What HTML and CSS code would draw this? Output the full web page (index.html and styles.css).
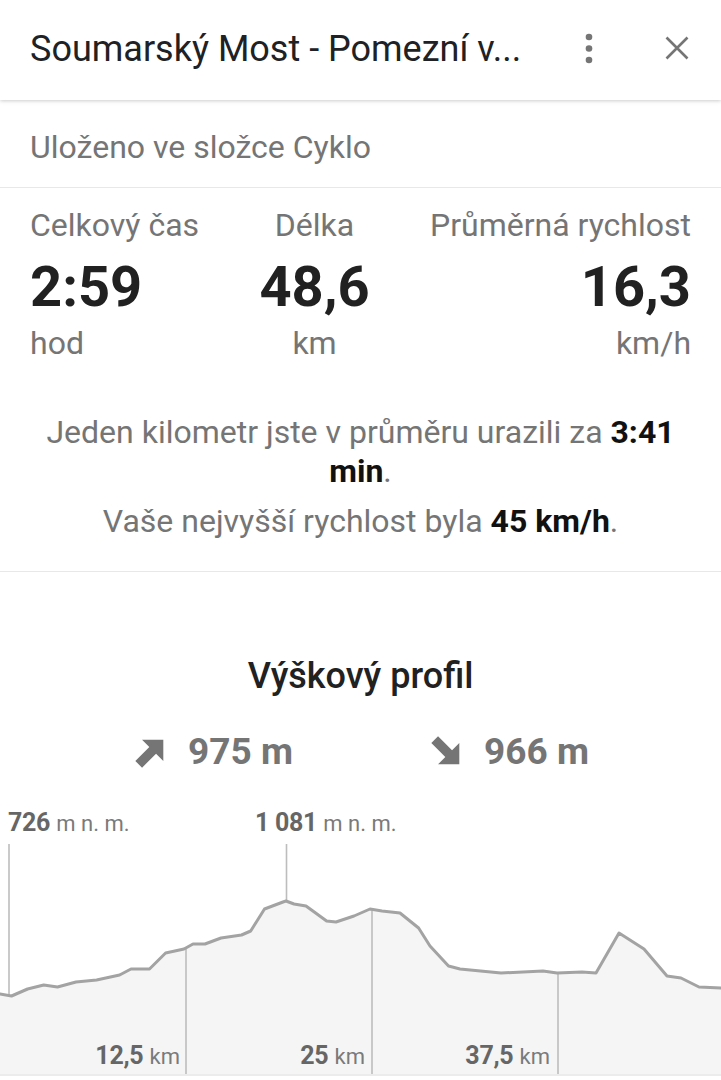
FILE: index.html
```html
<!DOCTYPE html>
<html lang="cs">
<head>
<meta charset="utf-8">
<title>Soumarský Most - Pomezní v...</title>
<link rel="stylesheet" href="styles.css">
</head>
<body>
<header class="topbar">
  <h1 class="title">Soumarský Most - Pomezní v...</h1>
  <button class="icon-btn" aria-label="Další možnosti">
    <svg width="48" height="48" viewBox="0 0 48 48"><circle cx="24" cy="11" r="3.3"/><circle cx="24" cy="22.5" r="3.3"/><circle cx="24" cy="34" r="3.3"/></svg>
  </button>
  <button class="icon-btn" aria-label="Zavřít">
    <svg width="48" height="48" viewBox="0 0 48 48"><path d="M13.5 11.5 L34.5 32.5 M34.5 11.5 L13.5 32.5" class="stroke"/></svg>
  </button>
</header>

<section class="saved">Uloženo ve složce Cyklo</section>

<section class="stats">
  <div class="stat stat-left">
    <div class="stat-label">Celkový čas</div>
    <div class="stat-value">2:59</div>
    <div class="stat-unit">hod</div>
  </div>
  <div class="stat stat-center">
    <div class="stat-label">Délka</div>
    <div class="stat-value">48,6</div>
    <div class="stat-unit">km</div>
  </div>
  <div class="stat stat-right">
    <div class="stat-label">Průměrná rychlost</div>
    <div class="stat-value">16,3</div>
    <div class="stat-unit">km/h</div>
  </div>
</section>

<section class="summary">
  <p class="summary-line">Jeden kilometr jste v průměru urazili za <b>3:41</b> <b>min</b>.</p>
  <p class="summary-line second">Vaše nejvyšší rychlost byla <b>45 km/h</b>.</p>
</section>

<section class="elevation">
  <h2 class="elev-title">Výškový profil</h2>
  <div class="elev-row">
    <div class="elev-item">
      <svg class="arrow" width="38" height="38" viewBox="0 0 24 24"><g transform="rotate(45 12 12)"><path d="M12 1 L21.5 10.5 L15 10.5 L15 23 L9 23 L9 10.5 L2.5 10.5 Z"/></g></svg>
      <span>975 m</span>
    </div>
    <div class="elev-item">
      <svg class="arrow" width="38" height="38" viewBox="0 0 24 24"><g transform="rotate(135 12 12)"><path d="M12 1 L21.5 10.5 L15 10.5 L15 23 L9 23 L9 10.5 L2.5 10.5 Z"/></g></svg>
      <span>966 m</span>
    </div>
  </div>

  <div class="chart">
    <svg class="chart-svg" width="721" height="298" viewBox="0 0 721 298">
      <path class="area" d="M0 218 L11.5 220 L27.6 213 L43.7 209 L57.5 211 L76 206 L96.6 204 L119.6 199 L131 193 L149.5 193 L165.6 177 L184 173 L193 168 L205 168 L221 162 L241.5 159 L250.7 155 L264.5 133 L283 126 L286 125 L294 128 L306 130 L317 138 L326.6 145 L336 146 L354 140 L370 133 L382 135 L400 137 L418.6 152 L430 170 L448.5 190 L460 193 L501 197 L543 195 L557 197 L582 196 L596 197 L619 157 L644 173 L667 200 L681 202 L699 211 L721 212 L721 298 L0 298 Z"/>
      <line class="grid" x1="9" y1="68" x2="9" y2="219.5"/>
      <line class="grid" x1="286.5" y1="68" x2="286.5" y2="125"/>
      <line class="grid" x1="186" y1="172.5" x2="186" y2="298"/>
      <line class="grid" x1="372" y1="133" x2="372" y2="298"/>
      <line class="grid" x1="558" y1="197" x2="558" y2="298"/>
      <path class="curve" d="M0 218 L11.5 220 L27.6 213 L43.7 209 L57.5 211 L76 206 L96.6 204 L119.6 199 L131 193 L149.5 193 L165.6 177 L184 173 L193 168 L205 168 L221 162 L241.5 159 L250.7 155 L264.5 133 L283 126 L286 125 L294 128 L306 130 L317 138 L326.6 145 L336 146 L354 140 L370 133 L382 135 L400 137 L418.6 152 L430 170 L448.5 190 L460 193 L501 197 L543 195 L557 197 L582 196 L596 197 L619 157 L644 173 L667 200 L681 202 L699 211 L721 212"/>
    </svg>
    <div class="chart-label top" style="left:8px"><b>726</b> <span>m n. m.</span></div>
    <div class="chart-label top" style="left:255px"><b>1 081</b> <span>m n. m.</span></div>
    <div class="chart-label bottom" style="right:541px"><b>12,5</b> <span>km</span></div>
    <div class="chart-label bottom" style="right:356px"><b>25</b> <span>km</span></div>
    <div class="chart-label bottom" style="right:171px"><b>37,5</b> <span>km</span></div>
  </div>
</section>
</body>
</html>
```

FILE: styles.css
```css
* { box-sizing: border-box; }

html, body {
  margin: 0;
  padding: 0;
  background: #ffffff;
}

body {
  width: 721px;
  font-family: Roboto, "Noto Sans", "Liberation Sans", sans-serif;
  color: #757575;
  overflow: hidden;
}

.topbar {
  position: relative;
  z-index: 1;
  height: 100px;
  display: flex;
  align-items: center;
  padding: 0 20px 0 30px;
  gap: 40px;
  background: #fff;
  box-shadow: 0 1px 3px rgba(0,0,0,0.14), 0 2px 5px rgba(0,0,0,0.05);
}

.title {
  flex: 1;
  margin: 0;
  font-size: 36px;
  font-weight: 400;
  line-height: 44px;
  color: #202124;
  white-space: nowrap;
  margin-top: -2px;
}

.icon-btn {
  width: 48px;
  height: 48px;
  padding: 0;
  border: 0;
  background: none;
  display: flex;
}

.icon-btn svg { fill: #757575; }
.icon-btn .stroke {
  fill: none;
  stroke: #757575;
  stroke-width: 2.6;
}

.saved {
  padding: 27px 30px 20px;
  font-size: 32px;
  line-height: 40px;
  border-bottom: 1px solid #e8e8e8;
}

.stats {
  display: flex;
  justify-content: space-between;
  padding: 17px 30px 0;
}

.stat {
  display: flex;
  flex-direction: column;
}

.stat-left { align-items: flex-start; }
.stat-center { align-items: center; }
.stat-right { align-items: flex-end; }

.stat-label,
.stat-unit {
  font-size: 32px;
  line-height: 40px;
}

.stat-value {
  margin-top: 12px;
  font-size: 56px;
  line-height: 60px;
  font-weight: 700;
  color: #212121;
}

.stat-unit { margin-top: 6px; }

.summary {
  padding: 49.6px 30px 30.5px;
  border-bottom: 1px solid #e8e8e8;
  text-align: center;
}

.summary-line {
  margin: 0;
  font-size: 32px;
  line-height: 39px;
}

.summary-line.second { margin-top: 11px; }

.summary-line b {
  font-weight: 700;
  color: #111;
}

.elevation {
  padding-top: 82px;
}

.elev-title {
  margin: 0;
  text-align: center;
  font-size: 36px;
  line-height: 44px;
  font-weight: 500;
  color: #212121;
}

.elev-row {
  margin-top: 31.6px;
  display: flex;
  justify-content: center;
  gap: 135px;
}

.elev-item {
  display: flex;
  align-items: center;
  gap: 18px;
  font-size: 37px;
  line-height: 44px;
  font-weight: 700;
  color: #757575;
}

.arrow { fill: #757575; flex: none; }

.chart {
  position: relative;
  margin-top: 2.6px;
  height: 300px;
  border-bottom: 2px solid #ececec;
}

.chart-svg {
  display: block;
}

.area { fill: #f5f5f5; }

.curve {
  fill: none;
  stroke: #a3a3a3;
  stroke-width: 3;
  stroke-linejoin: round;
  stroke-linecap: round;
}

.grid {
  stroke: #bdbdbd;
  stroke-width: 1.6;
}

.chart-label {
  position: absolute;
  font-size: 25px;
  line-height: 30px;
  white-space: nowrap;
  color: #666;
}

.chart-label b { font-weight: 700; letter-spacing: -0.3px; }
.chart-label span { font-size: 22px; color: #7a7a7a; }

.chart-label.top { top: 31.5px; }
.chart-label.bottom { top: 264.5px; }
```
